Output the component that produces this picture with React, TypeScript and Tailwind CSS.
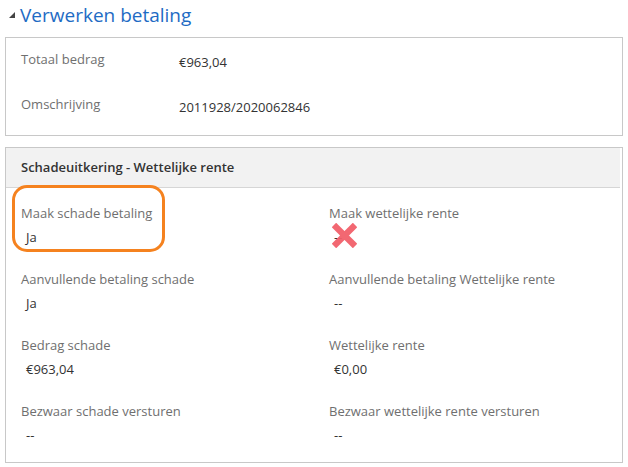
import React from 'react'

type Field = {
  label: string
  value?: string
  icon?: 'cross'
  highlight?: boolean
}

const rows: [Field, Field][] = [
  [
    { label: 'Maak schade betaling', value: 'Ja', highlight: true },
    { label: 'Maak wettelijke rente', value: '--', icon: 'cross' },
  ],
  [
    { label: 'Aanvullende betaling schade', value: 'Ja' },
    { label: 'Aanvullende betaling Wettelijke rente', value: '--' },
  ],
  [
    { label: 'Bedrag schade', value: '€963,04' },
    { label: 'Wettelijke rente', value: '€0,00' },
  ],
  [
    { label: 'Bezwaar schade versturen', value: '--' },
    { label: 'Bezwaar wettelijke rente versturen', value: '--' },
  ],
]

function CrossIcon() {
  return (
    <svg width="25" height="25" viewBox="0 0 24 24" className="absolute left-[3px] top-[-5px]">
      <path d="M4 4 L20 20 M20 4 L4 20" stroke="#f2606b" strokeWidth="6" strokeLinecap="square" opacity="0.95" />
    </svg>
  )
}

function FieldCell({ field }: { field: Field }) {
  return (
    <div className="relative h-[66px]">
      {field.highlight && (
        <div className="absolute left-[-9px] top-[-19px] h-[67px] w-[153px] rounded-[15px] border-[3px] border-[#f5821f]" />
      )}
      <div className="text-[#6f6f6f] leading-[18px]">{field.label}</div>
      <div className="relative mt-[6px] pl-[5px] text-[#333] leading-[18px]">
        {field.value}
        {field.icon === 'cross' && <CrossIcon />}
      </div>
    </div>
  )
}

export default function App() {
  return (
    <div className="h-[467px] w-[628px] bg-white px-[5px] text-[13px]" style={{ fontFamily: '"Open Sans", "Liberation Sans", sans-serif' }}>
      {/* Title */}
      <div className="flex h-[37px] items-start">
        <span className="mt-[12px] ml-[4px] inline-block h-0 w-0 border-b-[6px] border-l-[6px] border-l-transparent border-b-[#444]" />
        <h2 className="ml-[5px] mt-[1px] text-[19px] leading-[28px] text-[#1e6bc4]">Verwerken betaling</h2>
      </div>

      {/* Summary */}
      <div className="h-[99px] w-[618px] border border-[#c8c8c8] px-[15px] pt-[12px]">
        <div className="flex h-[45px]">
          <div className="w-[158px] text-[#6f6f6f]">Totaal bedrag</div>
          <div className="pt-[3px] text-[#333]">€963,04</div>
        </div>
        <div className="flex">
          <div className="w-[158px] text-[#6f6f6f]">Omschrijving</div>
          <div className="pt-[3px] text-[#333]">2011928/2020062846</div>
        </div>
      </div>

      {/* Details */}
      <div className="mt-[11px] h-[316px] w-[618px] border border-[#c8c8c8]">
        <div className="mr-[2px] flex h-[40px] items-center border-b border-[#d6d6d6] bg-[#f2f2f2] px-[15px] font-semibold text-[#333]">
          Schadeuitkering - Wettelijke rente
        </div>
        <div className="px-[15px] pt-[16px]">
          {rows.map((row, i) => (
            <div key={i} className="grid grid-cols-[308px_1fr]">
              <FieldCell field={row[0]} />
              <FieldCell field={row[1]} />
            </div>
          ))}
        </div>
      </div>
    </div>
  )
}
